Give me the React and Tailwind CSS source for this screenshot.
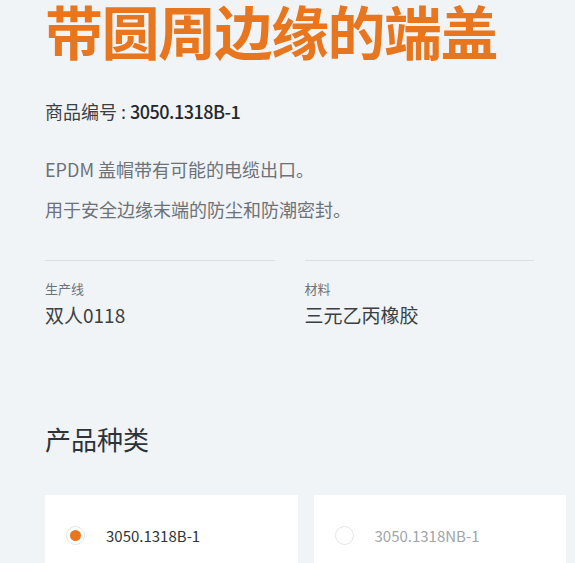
const specs = [
  { label: '生产线', value: '双人0118' },
  { label: '材料', value: '三元乙丙橡胶' },
]

const variants = [
  { code: '3050.1318B-1', active: true },
  { code: '3050.1318NB-1', active: false },
]

function Radio({ active }) {
  return (
    <span className="flex h-[19px] w-[19px] shrink-0 items-center justify-center rounded-full border border-[#e3e5e8] bg-white">
      {active && <span className="h-[11px] w-[11px] rounded-full bg-[#e8761f]" />}
    </span>
  )
}

export default function App() {
  return (
    <div className="min-h-[563px] overflow-hidden bg-[#f1f4f6] pl-[45px] pr-[9px] font-['Noto_Sans_CJK_SC','Noto_Sans',sans-serif]">
      <h1 className="pt-px text-[58px] font-bold leading-none tracking-[-1.5px] text-[#e8761f]">
        带圆周边缘的端盖
      </h1>

      <p className="mt-[39px] text-[18px] leading-[26px] text-[#3a3f44]">
        商品编号 : <span className="font-medium tracking-[-0.5px] text-[#23282d]">3050.1318B-1</span>
      </p>

      <div className="mt-[32px] text-[18px] leading-[26px] text-[#6c7278]">
        <p>EPDM 盖帽带有可能的电缆出口。</p>
        <p className="mt-[14px]">用于安全边缘末端的防尘和防潮密封。</p>
      </div>

      <div className="mt-[38px] grid w-[489px] grid-cols-2 gap-x-[30px]">
        {specs.map((s) => (
          <div key={s.label} className="border-t border-[#d9dee2] pt-[19px]">
            <div className="text-[13px] leading-[18px] text-[#6c7278]">{s.label}</div>
            <div className="mt-[5px] text-[19px] leading-[24px] text-[#3a3f44]">{s.value}</div>
          </div>
        ))}
      </div>

      <h2 className="mt-[95px] text-[26px] leading-[34px] text-[#2d3338]">产品种类</h2>

      <div className="mt-[39px] grid grid-cols-2 gap-4">
        {variants.map((v) => (
          <div key={v.code} className="flex h-[100px] items-start gap-[21px] bg-white pl-[21px] pt-[31px]">
            <Radio active={v.active} />
            <span
              className={`font-['Noto_Sans_CJK_SC','Noto_Sans',sans-serif] text-[15px] leading-[19px] ${v.active ? 'text-[#30353a]' : 'text-[#a0a5aa]'}`}
            >
              {v.code}
            </span>
          </div>
        ))}
      </div>
    </div>
  )
}
